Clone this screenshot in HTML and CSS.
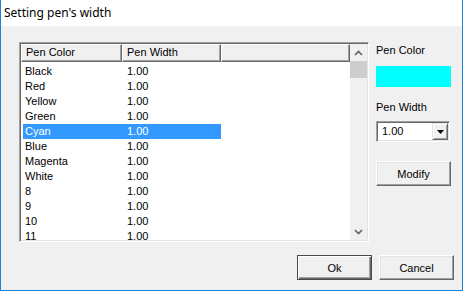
FILE: index.html
```html
<!doctype html>
<html lang="en">
<head>
    <meta charset="UTF-8" />
    <title>Setting pen's width</title>
    <link rel="stylesheet" href="styles.css">
</head>
<body>
    <div class="window">
        <div class="titlebar">Setting pen's width</div>
        <div class="client">
            <div class="main">
                <div class="listview">
                    <div class="lv-area">
                        <div class="lv-header">
                            <div class="hd hd-color">Pen Color</div>
                            <div class="hd hd-width">Pen Width</div>
                            <div class="hd hd-fill"></div>
                        </div>
                        <div class="lv-rows">
                            <div class="row"><span class="c1">Black</span><span class="c2">1.00</span></div>
                            <div class="row"><span class="c1">Red</span><span class="c2">1.00</span></div>
                            <div class="row"><span class="c1">Yellow</span><span class="c2">1.00</span></div>
                            <div class="row"><span class="c1">Green</span><span class="c2">1.00</span></div>
                            <div class="row selected"><span class="c1">Cyan</span><span class="c2">1.00</span></div>
                            <div class="row"><span class="c1">Blue</span><span class="c2">1.00</span></div>
                            <div class="row"><span class="c1">Magenta</span><span class="c2">1.00</span></div>
                            <div class="row"><span class="c1">White</span><span class="c2">1.00</span></div>
                            <div class="row"><span class="c1">8</span><span class="c2">1.00</span></div>
                            <div class="row"><span class="c1">9</span><span class="c2">1.00</span></div>
                            <div class="row"><span class="c1">10</span><span class="c2">1.00</span></div>
                            <div class="row"><span class="c1">11</span><span class="c2">1.00</span></div>
                        </div>
                    </div>
                    <div class="vscroll">
                        <div class="sb-btn">
                            <svg width="9" height="6" viewBox="0 0 9 6"><path d="M1 5 L4.5 1.5 L8 5" fill="none" stroke="#606060" stroke-width="1.6"/></svg>
                        </div>
                        <div class="sb-thumb"></div>
                        <div class="sb-track"></div>
                        <div class="sb-btn">
                            <svg width="9" height="6" viewBox="0 0 9 6"><path d="M1 1 L4.5 4.5 L8 1" fill="none" stroke="#606060" stroke-width="1.6"/></svg>
                        </div>
                    </div>
                </div>

                <div class="side">
                    <div class="label">Pen Color</div>
                    <div class="swatch"></div>
                    <div class="label label-width">Pen Width</div>
                    <div class="combo">
                        <span class="combo-text">1.00</span>
                        <span class="combo-btn">
                            <svg width="7" height="4" viewBox="0 0 7 4"><path d="M0 0 H7 L3.5 4 Z" fill="#000"/></svg>
                        </span>
                    </div>
                    <button class="btn btn-modify">Modify</button>
                </div>
            </div>

            <div class="footer">
                <button class="btn btn-default">Ok</button>
                <button class="btn">Cancel</button>
            </div>
        </div>
    </div>
</body>
</html>
```

FILE: styles.css
```css
body {
    margin: 0;
    padding: 0;
    background-color: #ffffff;
    font-family: 'Liberation Sans', Arial, sans-serif;
    font-size: 11px;
    color: #000;
}

.window {
    width: 463px;
    height: 291px;
    box-sizing: border-box;
    border: 1px solid #1a85d6;
    border-top: none;
    display: flex;
    flex-direction: column;
    background-color: #f0f0f0;
}

.titlebar {
    height: 26px;
    line-height: 26px;
    padding-left: 3px;
    background-color: #ffffff;
    font-family: 'Noto Sans', 'Open Sans', sans-serif;
    font-size: 12px;
    color: #000;
}

.client {
    flex: 1;
    padding: 16px 8px 10px 18px;
    display: flex;
    flex-direction: column;
}

.main {
    display: flex;
    gap: 7px;
    height: 200px;
}

/* list view with sunken edge */
.listview {
    width: 350px;
    height: 200px;
    box-sizing: border-box;
    border-top: 1px solid #a0a0a0;
    border-left: 1px solid #a0a0a0;
    border-right: 1px solid #ffffff;
    border-bottom: 1px solid #ffffff;
    box-shadow: inset 1px 1px 0 #696969, inset -1px -1px 0 #e3e3e3;
    padding: 1px;
    display: flex;
    background-color: #ffffff;
}

.lv-area {
    flex: 1;
    overflow: hidden;
    background-color: #ffffff;
}

.lv-header {
    display: flex;
    height: 18px;
}

.hd {
    box-sizing: border-box;
    height: 18px;
    line-height: 15px;
    padding-left: 4px;
    background-color: #f0f0f0;
    border-top: 1px solid #ffffff;
    border-left: 1px solid #ffffff;
    border-right: 1px solid #696969;
    border-bottom: 1px solid #696969;
    box-shadow: inset -1px -1px 0 #a0a0a0;
    white-space: nowrap;
}

.hd-color {
    width: 101px;
}

.hd-width {
    width: 99px;
}

.hd-fill {
    flex: 1;
}

.lv-rows {
    padding-top: 2px;
}

.row {
    display: flex;
    width: 198px;
    height: 15px;
    line-height: 15px;
    margin-left: 2px;
    white-space: nowrap;
}

.row .c1 {
    width: 99px;
    padding-left: 2px;
    box-sizing: border-box;
}

.row .c2 {
    padding-left: 5px;
}

.row.selected {
    background-color: #3399ff;
    color: #ffffff;
}

/* scrollbar */
.vscroll {
    width: 17px;
    display: flex;
    flex-direction: column;
    background-color: #f0f0f0;
}

.sb-btn {
    height: 17px;
    display: flex;
    align-items: center;
    justify-content: center;
}

.sb-thumb {
    height: 17px;
    background-color: #cdcdcd;
}

.sb-track {
    flex: 1;
}

/* right side controls */
.side {
    width: 75px;
    padding-top: 2px;
    display: flex;
    flex-direction: column;
}

.label {
    height: 13px;
    line-height: 13px;
    white-space: nowrap;
}

.swatch {
    margin-top: 9px;
    height: 21px;
    background-color: #00ffff;
}

.label-width {
    margin-top: 14px;
}

.combo {
    margin-top: 7px;
    width: 74px;
    height: 21px;
    box-sizing: border-box;
    border-top: 1px solid #a0a0a0;
    border-left: 1px solid #a0a0a0;
    border-right: 1px solid #ffffff;
    border-bottom: 1px solid #ffffff;
    box-shadow: inset 1px 1px 0 #696969, inset -1px -1px 0 #e3e3e3;
    padding: 1px;
    display: flex;
    background-color: #ffffff;
}

.combo-text {
    flex: 1;
    line-height: 17px;
    padding-left: 4px;
}

.combo-btn {
    width: 16px;
    height: 17px;
    box-sizing: border-box;
    background-color: #f0f0f0;
    border-top: 1px solid #e3e3e3;
    border-left: 1px solid #e3e3e3;
    border-right: 1px solid #696969;
    border-bottom: 1px solid #696969;
    box-shadow: inset 1px 1px 0 #ffffff, inset -1px -1px 0 #a0a0a0;
    display: flex;
    align-items: center;
    justify-content: center;
}

.btn {
    width: 75px;
    height: 25px;
    box-sizing: border-box;
    padding: 0;
    font-family: 'Liberation Sans', Arial, sans-serif;
    font-size: 11px;
    color: #000;
    background-color: #f0f0f0;
    border-top: 1px solid #ffffff;
    border-left: 1px solid #ffffff;
    border-right: 1px solid #696969;
    border-bottom: 1px solid #696969;
    box-shadow: inset -1px -1px 0 #a0a0a0, inset 1px 1px 0 #e3e3e3;
}

.btn-modify {
    margin-top: 19px;
}

.btn-default {
    border: 1px solid #4a4a4a;
    box-shadow: inset 1px 1px 0 #ffffff, inset -1px -1px 0 #696969, inset -2px -2px 0 #a0a0a0;
}

.footer {
    margin-top: 13px;
    display: flex;
    justify-content: flex-end;
    gap: 7px;
}
```
